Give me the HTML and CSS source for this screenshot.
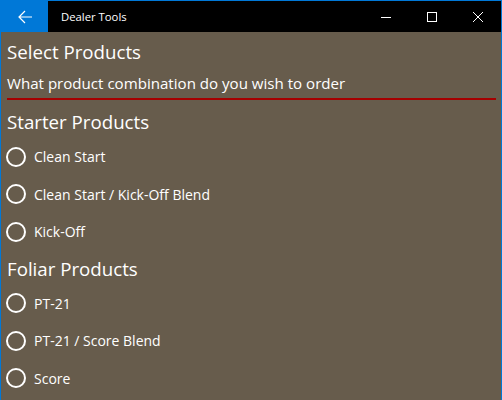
FILE: index.html
```html
<!DOCTYPE html>
<html>
<head>
<meta charset="utf-8">
<link rel="stylesheet" href="styles.css">
</head>
<body>
<div class="window">
  <div class="titlebar">
    <div class="back">
      <svg width="16" height="16" viewBox="0 0 16 16"><path d="M15 8H2M8 2L2 8l6 6" fill="none" stroke="#fff" stroke-width="1.2"/></svg>
    </div>
    <div class="title">Dealer Tools</div>
    <div class="controls">
      <div class="ctl"><svg width="10" height="10" viewBox="0 0 10 10"><path d="M0 5.5H10" stroke="#fff" stroke-width="1"/></svg></div>
      <div class="ctl"><svg width="10" height="10" viewBox="0 0 10 10"><rect x="0.5" y="0.5" width="9" height="9" fill="none" stroke="#fff" stroke-width="1"/></svg></div>
      <div class="ctl"><svg width="10" height="10" viewBox="0 0 10 10"><path d="M0 0L10 10M10 0L0 10" stroke="#fff" stroke-width="1"/></svg></div>
    </div>
  </div>
  <div class="content">
    <h1 class="heading">Select Products</h1>
    <p class="question">What product combination do you wish to order</p>
    <div class="rule"></div>
    <h2 class="heading section">Starter Products</h2>
    <div class="radio"><span class="circle"></span><span>Clean Start</span></div>
    <div class="radio"><span class="circle"></span><span>Clean Start / Kick-Off Blend</span></div>
    <div class="radio"><span class="circle"></span><span>Kick-Off</span></div>
    <h2 class="heading section">Foliar Products</h2>
    <div class="radio"><span class="circle"></span><span>PT-21</span></div>
    <div class="radio"><span class="circle"></span><span>PT-21 / Score Blend</span></div>
    <div class="radio"><span class="circle"></span><span>Score</span></div>
  </div>
</div>
</body>
</html>
```
FILE: styles.css
```css
html, body {
  margin: 0;
  padding: 0;
  background: #675c4c;
  overflow: hidden;
}
body {
  font-family: "Open Sans", "Noto Sans", sans-serif;
  color: #fff;
}
.window {
  width: 500px;
  height: 399px;
  border: 1px solid #0078d7;
  border-bottom: none;
  display: flex;
  flex-direction: column;
}
.titlebar {
  height: 31px;
  background: #000;
  display: flex;
  align-items: center;
  flex-shrink: 0;
}
.back {
  width: 47px;
  height: 31px;
  background: #0078d7;
  display: flex;
  align-items: center;
  justify-content: center;
}
.title {
  margin-left: 13px;
  font-size: 11.3px;
  flex: 1;
}
.controls {
  display: flex;
  height: 31px;
}
.ctl {
  width: 46px;
  height: 31px;
  display: flex;
  align-items: center;
  justify-content: center;
}
.content {
  flex: 1;
  background: #675c4c;
  padding: 0 5px 0 6px;
  display: flex;
  flex-direction: column;
}
.heading {
  margin: 0 0 3px;
  font-weight: normal;
  font-size: 18.7px;
  line-height: 26px;
}
h1.heading {
  margin-top: 7px;
  margin-bottom: 0;
}
.question {
  margin: 8px 0 0;
  font-size: 15.1px;
  line-height: 20px;
}
.rule {
  height: 2px;
  background: #a50000;
  margin-top: 5px;
  margin-bottom: 4px;
}
.section {
  margin-top: 5px;
}
.radio {
  display: flex;
  align-items: center;
  height: 37.5px;
  font-size: 14px;
}
.circle {
  width: 16px;
  height: 16px;
  border: 2px solid #fff;
  border-radius: 50%;
  margin-left: -1px;
  margin-right: 8px;
}
```
